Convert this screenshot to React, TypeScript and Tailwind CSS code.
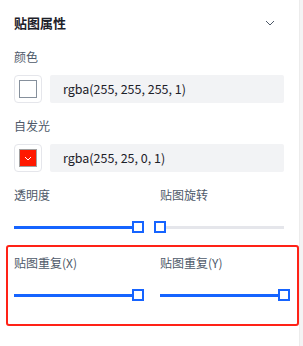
import React from 'react';

const FONT = { fontFamily: '"Noto Sans CJK SC", "Noto Sans", sans-serif' };

function Swatch({ color }: { color?: string }) {
  return (
    <div className="w-[28px] h-[28px] shrink-0 rounded-[4px] border border-[#e5e6eb] flex items-center justify-center bg-white">
      {color ? (
        <div
          className="w-[18px] h-[18px] border border-[#a0a0a0] flex items-center justify-center"
          style={{ background: color }}
        >
          <svg width="8" height="5" viewBox="0 0 8 5" fill="none">
            <path d="M1 1l3 3 3-3" stroke="#fff" strokeWidth="1" />
          </svg>
        </div>
      ) : (
        <div className="w-[18px] h-[18px] border border-[#86909c] bg-white" />
      )}
    </div>
  );
}

function ColorRow({ label, value, color }: { label: string; value: string; color?: string }) {
  return (
    <>
      <div className="h-[22px] flex items-center text-[12px] text-[#4e5969]">{label}</div>
      <div className="mt-[7px] flex gap-[8px] h-[28px]">
        <Swatch color={color} />
        <div className="flex-1 bg-[#f2f3f5] rounded-[2px] flex items-center pl-[13px] text-[12.5px] text-[#1d2129]">
          {value}
        </div>
      </div>
    </>
  );
}

// pct: 0..1 position of the thumb along the track
function Slider({ pct }: { pct: number }) {
  return (
    <div className="relative h-[20px] w-[124px]">
      <div className="absolute left-0 right-0 top-[9px] h-[3px] bg-[#e5e6eb]" />
      <div className="absolute left-0 top-[9px] h-[3px] bg-[#1664ff]" style={{ width: `${pct * 100}%` }} />
      <div
        className="absolute top-[4px] w-[12px] h-[12px] -ml-[6px] bg-white border-2 border-[#1664ff]"
        style={{ left: `${pct * 100}%` }}
      />
    </div>
  );
}

function SliderPair({ left, right }: { left: [string, number]; right: [string, number] }) {
  return (
    <>
      <div className="flex gap-[22px] text-[12px] text-[#4e5969]">
        <div className="w-[124px] h-[22px] flex items-center">{left[0]}</div>
        <div className="w-[124px] h-[22px] flex items-center">{right[0]}</div>
      </div>
      <div className="mt-[11px] flex gap-[22px]">
        <Slider pct={left[1]} />
        <Slider pct={right[1]} />
      </div>
    </>
  );
}

export default function App() {
  return (
    <div className="flex w-[303px] h-[346px] bg-white overflow-hidden" style={FONT}>
      <div className="w-[299px] shrink-0 pl-[14px] pr-[15px] flex flex-col">
        <div className="h-[46px] flex items-center justify-between">
          <span className="text-[13px] font-bold text-[#1d2129]">贴图属性</span>
          <svg width="10" height="6" viewBox="0 0 10 6" fill="none" className="mr-[9px]">
            <path d="M1 1l4 4 4-4" stroke="#4e5969" strokeWidth="1" />
          </svg>
        </div>

        <ColorRow label="颜色" value="rgba(255, 255, 255, 1)" />
        <div className="mt-[12px]">
          <ColorRow label="自发光" value="rgba(255, 25, 0, 1)" color="#ff1900" />
        </div>

        <div className="mt-[12px]">
          <SliderPair left={['透明度', 1]} right={['贴图旋转', 0]} />
        </div>

        <div className="mt-[8px] -ml-[8px] -mr-[15px] border-2 border-[#ff2217] rounded-[3px] pl-[6px] pr-[13px] pt-[5px] pb-[19px]">
          <SliderPair left={['贴图重复(X)', 1]} right={['贴图重复(Y)', 1]} />
        </div>
      </div>
      <div className="flex-1 bg-[#f4f4f5] border-l border-[#ececec]" />
    </div>
  );
}
